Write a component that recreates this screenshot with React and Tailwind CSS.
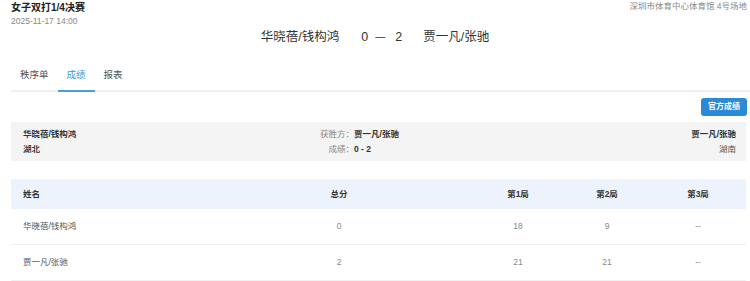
import React from "react";

const FONT = { fontFamily: '"Liberation Sans", "Noto Sans CJK SC", sans-serif' };

const rows = [
  { name: "华晓蓓/钱构鸿", total: "0", g1: "18", g2: "9", g3: "--" },
  { name: "贾一凡/张驰", total: "2", g1: "21", g2: "21", g3: "--" },
];

const cols = "grid grid-cols-[195px_266px_92px_86px_96px]";

export default function App() {
  return (
    <div className="w-[750px] h-[281px] overflow-hidden bg-white" style={FONT}>
      {/* header */}
      <div className="flex justify-between items-start">
        <div className="pl-[11px] pt-[2px]">
          <div className="text-[10px] leading-[12px] font-bold text-[#222]">女子双打1/4决赛</div>
          <div className="mt-[2px] text-[8.5px] leading-[10px] text-[#888]">2025-11-17 14:00</div>
        </div>
        <div className="pr-[3px] pt-[1px] text-[8.5px] leading-[10px] text-[#888]">深圳市体育中心体育馆 4号场地</div>
      </div>

      {/* score line */}
      <div className="mt-[3px] flex justify-center items-center text-[12.5px] leading-[16px] text-[#333]">
        <span>华晓蓓/钱构鸿</span>
        <span className="ml-[22px]">0</span>
        <span className="ml-[7px] text-[10px]">—</span>
        <span className="ml-[10px]">2</span>
        <span className="ml-[21px]">贾一凡/张驰</span>
      </div>

      {/* tabs */}
      <div className="mt-[16px] ml-[11px] flex border-b-2 border-[#efefef] text-[9.5px] leading-[12px]">
        <div className="px-[9px] pt-[8px] pb-[9px] -mb-[2px] border-b-2 border-transparent text-[#555]">秩序单</div>
        <div className="px-[9px] pt-[8px] pb-[9px] -mb-[2px] border-b-2 border-[#4a9fd8] text-[#3d9ad8]">成绩</div>
        <div className="px-[9px] pt-[8px] pb-[9px] -mb-[2px] border-b-2 border-transparent text-[#555]">报表</div>
      </div>

      {/* official button */}
      <div className="mt-[6px] flex justify-end pr-[3px]">
        <button className="w-[46px] h-[18px] rounded-[3px] bg-[#2b8ad6] text-white text-[8px] font-bold leading-[18px]">
          官方成绩
        </button>
      </div>

      {/* summary panel */}
      <div className="mt-[6px] ml-[11px] mr-[4px] bg-[#f4f4f4] pl-[12px] pr-[10px] pt-[5px] pb-[4px] flex text-[8.5px] leading-[15px]">
        <div className="w-[297px]">
          <div className="font-bold text-[#333]">华晓蓓/钱构鸿</div>
          <div className="font-bold text-[#444]">湖北</div>
        </div>
        <div className="grid grid-cols-[auto_auto] items-center">
          <span className="text-right text-[#888]">获胜方：</span>
          <span className="font-bold text-[#333]">贾一凡/张驰</span>
          <span className="text-right text-[#888]">成绩：</span>
          <span className="font-bold text-[#333]">0 - 2</span>
        </div>
        <div className="flex-1 text-right">
          <div className="font-bold text-[#333]">贾一凡/张驰</div>
          <div className="text-[#555]">湖南</div>
        </div>
      </div>

      {/* result table */}
      <div className="mt-[18px] ml-[11px] mr-[4px] border-t border-[#f0f3f7] text-[8.5px]">
        <div className={`${cols} h-[29px] items-center bg-[#ecf3fc] font-bold text-[#333]`}>
          <div className="pl-[12px]">姓名</div>
          <div className="text-center">总分</div>
          <div className="text-center">第1局</div>
          <div className="text-center">第2局</div>
          <div className="text-center">第3局</div>
        </div>
        {rows.map((r) => (
          <div key={r.name} className={`${cols} h-[36px] items-center border-b border-[#f0f0f0] text-[#888]`}>
            <div className="pl-[12px] text-[#555]">{r.name}</div>
            <div className="text-center">{r.total}</div>
            <div className="text-center">{r.g1}</div>
            <div className="text-center">{r.g2}</div>
            <div className="text-center">{r.g3}</div>
          </div>
        ))}
      </div>
    </div>
  );
}
